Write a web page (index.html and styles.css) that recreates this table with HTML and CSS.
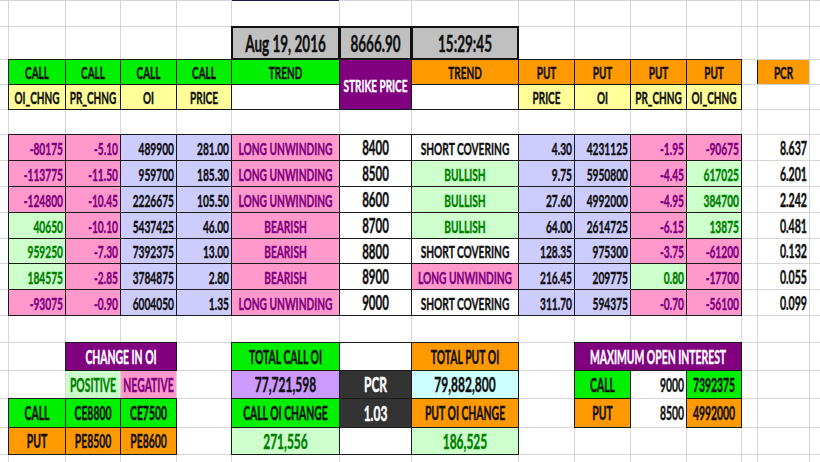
FILE: index.html
```html
<!DOCTYPE html>
<html>
<head>
<meta charset="utf-8">
<link rel="stylesheet" href="styles.css">
</head>
<body>
<table class="sheet">
<colgroup>
<col style="width:8px"><col style="width:56px"><col style="width:54px"><col style="width:55px"><col style="width:54px"><col style="width:107px"><col style="width:71px"><col style="width:106px"><col style="width:55px"><col style="width:55px"><col style="width:55px"><col style="width:54px"><col style="width:15px"><col style="width:51px"><col style="width:20px">
</colgroup>
<tr class="h25"><td></td><td></td><td></td><td></td><td></td><td class="tl"></td><td></td><td></td><td></td><td></td><td></td><td></td><td></td><td></td><td></td></tr>
<tr class="h32"><td></td><td></td><td></td><td></td><td></td><td class="gr big"><span>Aug 19, 2016</span></td><td class="gr big"><span>8666.90</span></td><td class="gr big"><span>15:29:45</span></td><td></td><td></td><td></td><td></td><td></td><td></td><td></td></tr>
<tr class="h24"><td></td><td class="g b hd"><span>CALL</span></td><td class="g b hd"><span>CALL</span></td><td class="g b hd"><span>CALL</span></td><td class="g b hd"><span>CALL</span></td><td class="g b hd"><span>TREND</span></td><td class="p b hd" rowspan="2"><span>STRIKE PRICE</span></td><td class="o b hd"><span>TREND</span></td><td class="o b hd"><span>PUT</span></td><td class="o b hd"><span>PUT</span></td><td class="o b hd"><span>PUT</span></td><td class="o b hd"><span>PUT</span></td><td></td><td class="o hd pcr"><span>PCR</span></td><td></td></tr>
<tr class="h24"><td></td><td class="y b hd"><span>OI_CHNG</span></td><td class="y b hd"><span>PR_CHNG</span></td><td class="y b hd"><span>OI</span></td><td class="y b hd"><span>PRICE</span></td><td class="b"></td><td class="b"></td><td class="y b hd"><span>PRICE</span></td><td class="y b hd"><span>OI</span></td><td class="y b hd"><span>PR_CHNG</span></td><td class="y b hd"><span>OI_CHNG</span></td><td></td><td></td><td></td></tr>
<tr class="h24"><td></td><td></td><td></td><td></td><td></td><td></td><td></td><td></td><td></td><td></td><td></td><td></td><td></td><td></td><td></td></tr>
<tr class="h25"><td></td><td class="pk b r"><span>-80175</span></td><td class="pk b r"><span>-5.10</span></td><td class="lv b r"><span>489900</span></td><td class="lv b r"><span>281.00</span></td><td class="pk b"><span>LONG UNWINDING</span></td><td class="b sp"><span>8400</span></td><td class="b"><span>SHORT COVERING</span></td><td class="lv b r"><span>4.30</span></td><td class="lv b r"><span>4231125</span></td><td class="pk b r"><span>-1.95</span></td><td class="pk b r"><span>-90675</span></td><td></td><td class="r pv"><span>8.637</span></td><td></td></tr>
<tr class="h25"><td></td><td class="pk b r"><span>-113775</span></td><td class="pk b r"><span>-11.50</span></td><td class="lv b r"><span>959700</span></td><td class="lv b r"><span>185.30</span></td><td class="pk b"><span>LONG UNWINDING</span></td><td class="b sp"><span>8500</span></td><td class="lg b"><span>BULLISH</span></td><td class="lv b r"><span>9.75</span></td><td class="lv b r"><span>5950800</span></td><td class="pk b r"><span>-4.45</span></td><td class="lg b r"><span>617025</span></td><td></td><td class="r pv"><span>6.201</span></td><td></td></tr>
<tr class="h25"><td></td><td class="pk b r"><span>-124800</span></td><td class="pk b r"><span>-10.45</span></td><td class="lv b r"><span>2226675</span></td><td class="lv b r"><span>105.50</span></td><td class="pk b"><span>LONG UNWINDING</span></td><td class="b sp"><span>8600</span></td><td class="lg b"><span>BULLISH</span></td><td class="lv b r"><span>27.60</span></td><td class="lv b r"><span>4992000</span></td><td class="pk b r"><span>-4.95</span></td><td class="lg b r"><span>384700</span></td><td></td><td class="r pv"><span>2.242</span></td><td></td></tr>
<tr class="h25"><td></td><td class="lg b r"><span>40650</span></td><td class="pk b r"><span>-10.10</span></td><td class="lv b r"><span>5437425</span></td><td class="lv b r"><span>46.00</span></td><td class="pk b"><span>BEARISH</span></td><td class="b sp"><span>8700</span></td><td class="lg b"><span>BULLISH</span></td><td class="lv b r"><span>64.00</span></td><td class="lv b r"><span>2614725</span></td><td class="pk b r"><span>-6.15</span></td><td class="lg b r"><span>13875</span></td><td></td><td class="r pv"><span>0.481</span></td><td></td></tr>
<tr class="h24"><td></td><td class="lg b r"><span>959250</span></td><td class="pk b r"><span>-7.30</span></td><td class="lv b r"><span>7392375</span></td><td class="lv b r"><span>13.00</span></td><td class="pk b"><span>BEARISH</span></td><td class="b sp"><span>8800</span></td><td class="b"><span>SHORT COVERING</span></td><td class="lv b r"><span>128.35</span></td><td class="lv b r"><span>975300</span></td><td class="pk b r"><span>-3.75</span></td><td class="pk b r"><span>-61200</span></td><td></td><td class="r pv"><span>0.132</span></td><td></td></tr>
<tr class="h25"><td></td><td class="lg b r"><span>184575</span></td><td class="pk b r"><span>-2.85</span></td><td class="lv b r"><span>3784875</span></td><td class="lv b r"><span>2.80</span></td><td class="pk b"><span>BEARISH</span></td><td class="b sp"><span>8900</span></td><td class="pk b"><span>LONG UNWINDING</span></td><td class="lv b r"><span>216.45</span></td><td class="lv b r"><span>209775</span></td><td class="lg b r"><span>0.80</span></td><td class="pk b r"><span>-17700</span></td><td></td><td class="r pv"><span>0.055</span></td><td></td></tr>
<tr class="h25"><td></td><td class="pk b r"><span>-93075</span></td><td class="pk b r"><span>-0.90</span></td><td class="lv b r"><span>6004050</span></td><td class="lv b r"><span>1.35</span></td><td class="pk b"><span>LONG UNWINDING</span></td><td class="b sp"><span>9000</span></td><td class="b"><span>SHORT COVERING</span></td><td class="lv b r"><span>311.70</span></td><td class="lv b r"><span>594375</span></td><td class="pk b r"><span>-0.70</span></td><td class="pk b r"><span>-56100</span></td><td></td><td class="r pv"><span>0.099</span></td><td></td></tr>
<tr class="h26"><td></td><td></td><td></td><td></td><td></td><td></td><td></td><td></td><td></td><td></td><td></td><td></td><td></td><td></td><td></td></tr>
<tr class="h27"><td></td><td></td><td class="p b bt" colspan="2"><span>CHANGE IN OI</span></td><td></td><td class="g b bt"><span>TOTAL CALL OI</span></td><td class="b"></td><td class="o b bt"><span>TOTAL PUT OI</span></td><td></td><td class="p b bt" colspan="3"><span>MAXIMUM OPEN INTEREST</span></td><td></td><td></td><td></td></tr>
<tr class="h27"><td></td><td></td><td class="lg bt"><span>POSITIVE</span></td><td class="pk bt"><span>NEGATIVE</span></td><td></td><td class="lv2 b big2"><span>77,721,598</span></td><td class="dk b big2"><span>PCR</span></td><td class="cy b big2"><span>79,882,800</span></td><td></td><td class="g b bt"><span>CALL</span></td><td class="r bt"><span>9000</span></td><td class="g b bt"><span>7392375</span></td><td></td><td></td><td></td></tr>
<tr class="h28"><td></td><td class="g b bt"><span>CALL</span></td><td class="g b bt"><span>CE8800</span></td><td class="g b bt"><span>CE7500</span></td><td></td><td class="g b bt"><span>CALL OI CHANGE</span></td><td class="dk b big2"><span>1.03</span></td><td class="o b bt"><span>PUT OI CHANGE</span></td><td></td><td class="o b bt"><span>PUT</span></td><td class="r bt"><span>8500</span></td><td class="o b bt"><span>4992000</span></td><td></td><td></td><td></td></tr>
<tr class="h26"><td></td><td class="o b bt"><span>PUT</span></td><td class="o b bt"><span>PE8500</span></td><td class="o b bt"><span>PE8600</span></td><td></td><td class="lg b big2"><span>271,556</span></td><td class="b"></td><td class="lg b big2"><span>186,525</span></td><td></td><td></td><td></td><td></td><td></td><td></td><td></td></tr>
<tr class="h26"><td></td><td></td><td></td><td></td><td></td><td></td><td></td><td></td><td></td><td></td><td></td><td></td><td></td><td></td><td></td></tr>
</table>
</body>
</html>
```
FILE: styles.css
```css
html, body {
  margin: 0;
  padding: 0;
  overflow: hidden;
  background: #ffffff;
}

.sheet {
  border-collapse: separate;
  border-spacing: 1px;
  table-layout: fixed;
  width: 832px;
  margin-left: -1px;
  background: #d6d6d6;
  font-family: Lato, "Open Sans", sans-serif;
  font-weight: 700;
  color: #111111;
}

.sheet td {
  padding: 0;
  background: #ffffff;
  font-size: 10.2px;
  text-align: center;
  vertical-align: middle;
  white-space: nowrap;
  overflow: visible;
}

.sheet td span {
  display: inline-block;
  line-height: 12px;
  transform: scaleY(1.75);
  -webkit-text-stroke: 0.25px currentColor;
}

.h24 { height: 24px; }
.h25 { height: 25px; }
.h26 { height: 26px; }
.h27 { height: 27px; }
.h28 { height: 28px; }
.h32 { height: 32px; }

.r { text-align: right !important; }
.r span { margin-right: 2px; }

.b { box-shadow: 0 0 0 1px #1a1a1a; }

.tl { box-shadow: 0 -1px 0 #1c1c50; }

.hd { font-size: 10px !important; }
.big { font-size: 13.5px !important; }
.big2 { font-size: 12px !important; }
.bt { font-size: 10.4px !important; }
.sp { font-size: 11.5px !important; }
.pv { font-size: 10.6px !important; }

.gr {
  background: #c0c0c0 !important;
  box-shadow: 0 0 0 1px #111111, inset 0 0 0 1px #111111;
}
.g { background: #00f000 !important; }
.y { background: #ffff99 !important; }
.p { background: #800080 !important; color: #ffffff; }
.o { background: #ff9900 !important; }
.pk { background: #ff99cc !important; color: #800080; }
.lv { background: #ccccff !important; }
.lg { background: #ccffcc !important; color: #008000; }
.lv2 { background: #cc99ff !important; }
.cy { background: #ccffff !important; }
.dk { background: #333333 !important; color: #ffffff; }
.pcr { box-shadow: -1px 0 0 #111111; }
```
